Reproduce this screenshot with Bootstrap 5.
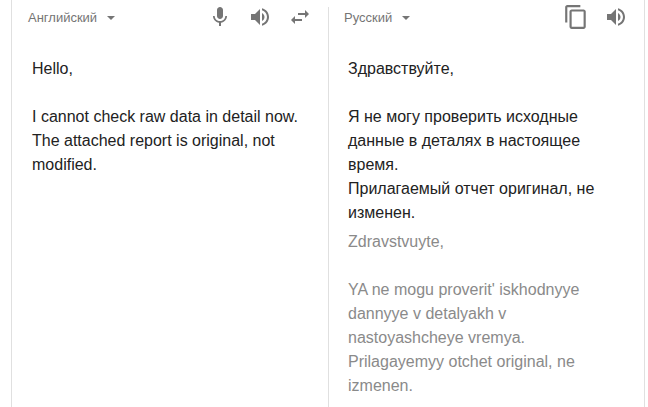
<!DOCTYPE html>
<html lang="ru">
<head>
<meta charset="utf-8">
<title>Перевод</title>
<link href="https://cdn.jsdelivr.net/npm/bootstrap@5.3.0/dist/css/bootstrap.min.css" rel="stylesheet">
<style>
html,body{height:407px;overflow:hidden;background:#fff}
body{font-family:"Liberation Sans",Arial,sans-serif;padding:0 3px 0 11px}
.tr-shell{height:407px;border-left:1px solid #e0e0e0;border-right:1px solid #e0e0e0;width:634px}
.tr-left{width:316px;flex:none}
.tr-right{flex:1 1 auto;border-left:1px solid #e0e0e0;margin-top:7px}
.tr-head{height:36px;color:#757575}
.tr-left .tr-head{padding:0 16px 0 16px;height:36px}
.tr-right .tr-head{margin-top:-7px;padding-left:15px;padding-right:16px}
.tr-lang{font-size:13px;white-space:nowrap;line-height:36px}
.tr-caret{width:0;height:0;border-left:4px solid transparent;border-right:4px solid transparent;border-top:4px solid #757575;margin-left:10px;margin-top:-1px}
.tr-tools{margin-bottom:2px}
.tr-ico{fill:#757575;display:block;flex:none}
.tr-body{font-size:16px;line-height:24px;color:#222;padding:21px 19px 0 20px}
.tr-right .tr-body{padding:21px 30px 0 19px}
.tr-translit{font-size:16px;line-height:24px;color:#8a8a8a;padding:5px 30px 0 19px}
</style>
</head>
<body>
<div class="tr-shell d-flex">
  <div class="tr-left">
    <div class="tr-head d-flex align-items-center">
      <span class="tr-lang">Английский</span><span class="tr-caret"></span>
      <div class="tr-tools d-flex align-items-center ms-auto" style="gap:16px">
        <svg class="tr-ico" width="24" height="24" viewBox="0 0 24 24"><path d="M12 14c1.660 0 3-1.340 3-3V5c0-1.660-1.340-3-3-3S9 3.340 9 5v6c0 1.660 1.340 3 3 3zm5.300-3c0 3-2.540 5.100-5.300 5.100S6.700 14 6.700 11H5c0 3.410 2.720 6.230 6 6.720V21h2v-3.280c3.280-.480 6-3.300 6-6.720h-1.700z"/></svg>
        <svg class="tr-ico" width="24" height="24" viewBox="0 0 24 24"><path d="M3 9v6h4l5 5V4L7 9H3zm13.500 3c0-1.770-1.020-3.290-2.500-4.030v8.050c1.480-.730 2.500-2.250 2.500-4.020zM14 3.230v2.060c2.890.860 5 3.540 5 6.710s-2.110 5.850-5 6.710v2.060c4.010-.910 7-4.490 7-8.770s-2.990-7.860-7-8.770z"/></svg>
        <svg class="tr-ico" width="24" height="24" viewBox="0 0 24 24"><path d="M6.990 11 3 15l3.990 4v-3H14v-2H6.990v-3zM21 9l-3.990-4v3H10v2h7.010v3L21 9z"/></svg>
      </div>
    </div>
    <div class="tr-body">Hello,<br><br>I cannot check raw data in detail now. The attached report is original, not modified.</div>
  </div>
  <div class="tr-right">
    <div class="tr-head d-flex align-items-center">
      <span class="tr-lang">Русский</span><span class="tr-caret"></span>
      <div class="tr-tools d-flex align-items-center ms-auto" style="gap:15px">
        <svg class="tr-ico" width="26" height="26" viewBox="0 0 24 24"><path d="M16 1H4c-1.100 0-2 .9-2 2v14h2V3h12V1zm3 4H8c-1.100 0-2 .9-2 2v14c0 1.100.9 2 2 2h11c1.100 0 2-.9 2-2V7c0-1.100-.9-2-2-2zm0 16H8V7h11v14z"/></svg>
        <svg class="tr-ico" width="24" height="24" viewBox="0 0 24 24"><path d="M3 9v6h4l5 5V4L7 9H3zm13.500 3c0-1.770-1.020-3.290-2.500-4.030v8.050c1.480-.730 2.500-2.250 2.500-4.020zM14 3.230v2.060c2.890.860 5 3.540 5 6.710s-2.110 5.850-5 6.710v2.060c4.010-.910 7-4.490 7-8.770s-2.990-7.860-7-8.770z"/></svg>
      </div>
    </div>
    <div class="tr-body">Здравствуйте,<br><br>Я не могу проверить исходные данные в деталях в настоящее время.<br>Прилагаемый отчет оригинал, не изменен.</div>
    <div class="tr-translit">Zdravstvuyte,<br><br>YA ne mogu proverit' iskhodnyye dannyye v detalyakh v nastoyashcheye vremya.<br>Prilagayemyy otchet original, ne izmenen.</div>
  </div>
</div>
<script src="https://cdn.jsdelivr.net/npm/bootstrap@5.3.0/dist/js/bootstrap.bundle.min.js"></script>
</body>
</html>
